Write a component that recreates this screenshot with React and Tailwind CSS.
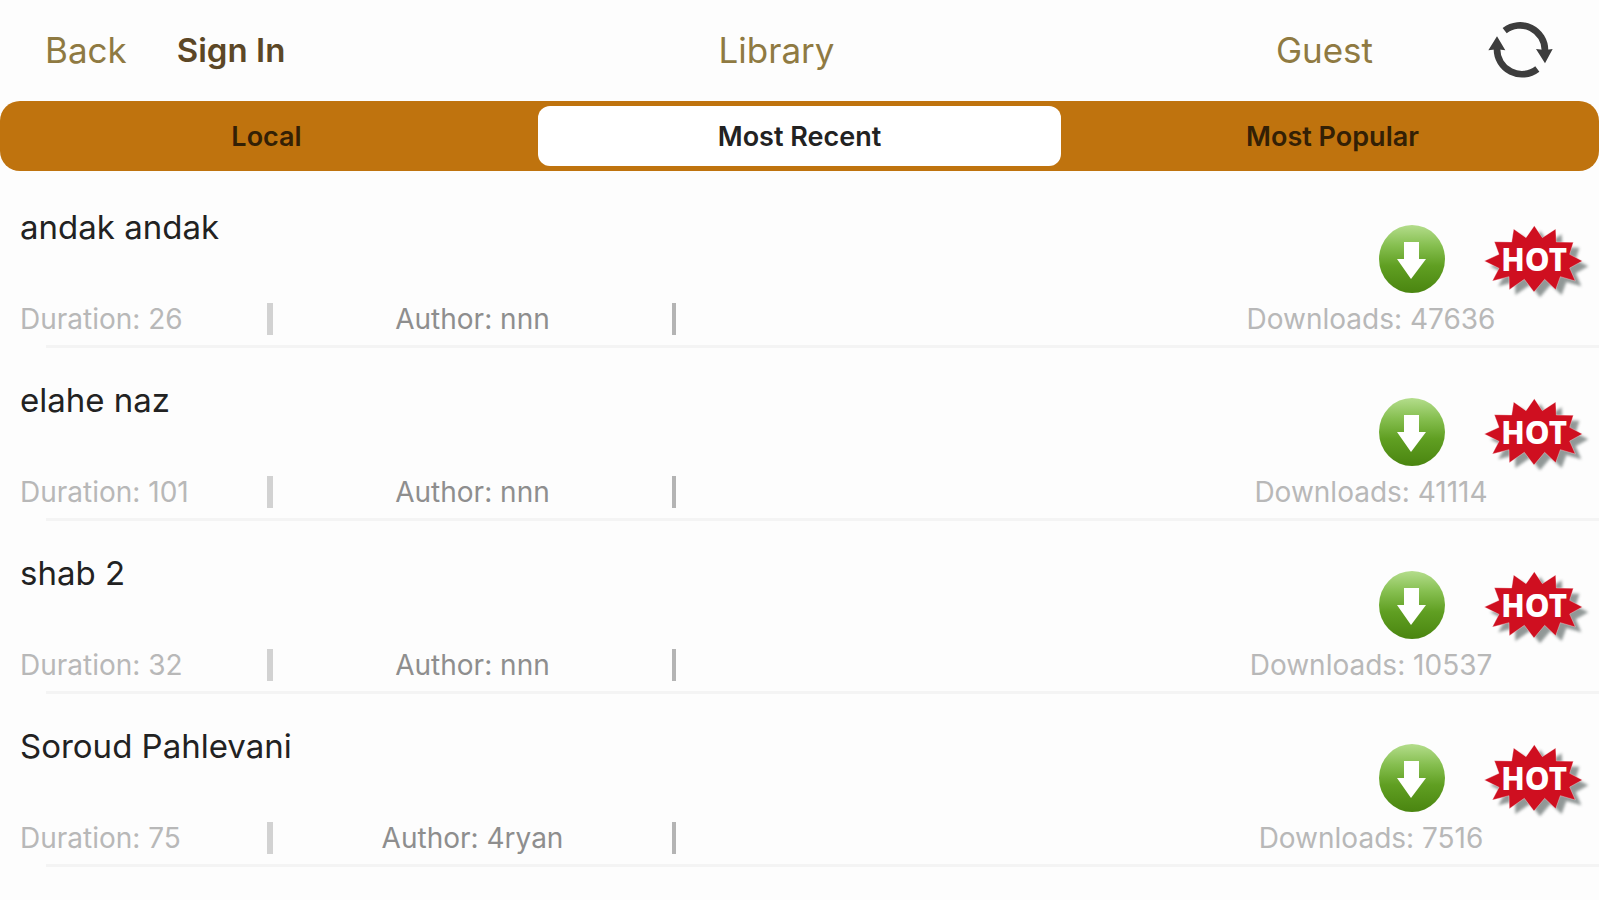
const TABS = ['Local', 'Most Recent', 'Most Popular']

const SONGS = [
  { title: 'andak andak', duration: 26, author: 'nnn', downloads: 47636 },
  { title: 'elahe naz', duration: 101, author: 'nnn', downloads: 41114 },
  { title: 'shab 2', duration: 32, author: 'nnn', downloads: 10537 },
  { title: 'Soroud Pahlevani', duration: 75, author: '4ryan', downloads: 7516 },
]

function RefreshIcon() {
  return (
    <svg width="66" height="60" viewBox="54 30 198 180" fill="none" stroke="#3d3d3d" strokeWidth="20">
      <path d="M107 62A75 75 0 0 1 228 122" />
      <path d="M205 177A75 75 0 0 1 84 116" />
      <path d="M201 117 228 120 251 117 228 160Z" fill="#3d3d3d" stroke="none" />
      <path d="M58 121 84 118 109 121 84 79Z" fill="#3d3d3d" stroke="none" />
    </svg>
  )
}

function DownloadIcon() {
  return (
    <svg width="66" height="68" viewBox="0 0 66 68">
      <defs>
        <linearGradient id="green" x1="0" y1="0" x2="0" y2="1">
          <stop offset="0" stopColor="#b4dd8c" />
          <stop offset="0.3" stopColor="#86bf50" />
          <stop offset="0.6" stopColor="#609f22" />
          <stop offset="1" stopColor="#4a8510" />
        </linearGradient>
      </defs>
      <ellipse cx="33" cy="34" rx="33" ry="34" fill="url(#green)" />
      <path d="M25 17h15v17h7L32 54 18 34h7z" fill="#fff" />
    </svg>
  )
}

const BURST =
  'M190 44 214 80 254 54 256 93 307 94 296 130 334 150 296 171 313 210 268 197 254 236 221 205 189 243 160 205 115 236 114 197 64 210 84 172 40 150 84 130 70 92 122 93 128 54 165 80Z'

function HotBadge() {
  return (
    <svg width="108" height="86" viewBox="36 30 324 258" role="img" aria-label="Hot">
      <defs>
        <filter id="soft" x="-10%" y="-10%" width="120%" height="120%">
          <feGaussianBlur stdDeviation="4" />
        </filter>
      </defs>
      <path d={BURST} fill="#4b5654" opacity="0.6" filter="url(#soft)" transform="translate(18 16)" />
      <path d={BURST} fill="#cf0f20" stroke="#fff" strokeOpacity="0.5" strokeWidth="2" />
      <text x="189" y="179" textAnchor="middle" fill="#fff" fontFamily="Noto Sans, sans-serif" fontWeight="800" fontSize="94">
        HOT
      </text>
    </svg>
  )
}

function SongRow({ song }) {
  return (
    <li>
      <div className="flex h-[170px] pl-5 pr-2">
        <div className="flex flex-1 flex-col justify-between pt-8 pb-2">
          <h2 className="text-[33px] leading-10 text-[#222222]">{song.title}</h2>
          <div className="flex items-center text-[28px] leading-9">
            <span className="w-[247px] text-[#b8b8b8]">Duration: {song.duration}</span>
            <span className="h-8 w-1.5 bg-[#d2d2d2]" />
            <span className="w-[399px] text-center text-[#8e8e8e]">Author: {song.author}</span>
            <span className="h-8 w-1 bg-[#b4b4b4]" />
          </div>
        </div>
        <div className="flex w-[248px] flex-col justify-between pt-[50px] pb-2">
          <button type="button" aria-label={`Download ${song.title}`} className="mr-[50px] self-end">
            <DownloadIcon />
          </button>
          <span className="flex justify-center text-[28px] leading-9 whitespace-pre text-[#b8b8b8]">Downloads: {song.downloads}</span>
        </div>
        <div className="-ml-3 pt-[46px]">
          <HotBadge />
        </div>
      </div>
      <div className="ml-[46px] h-[3px] bg-[#f4f4f4]" />
    </li>
  )
}

export default function App() {
  return (
    <main className="min-h-screen bg-[#fdfdfd] font-['Inter',sans-serif]">
      <header className="flex h-[101px] items-center pr-[46px] pb-0.5 text-[35px] leading-10 text-[#8f7a42]">
        <nav className="flex flex-1 items-center gap-[50px]">
          <button type="button" className="ml-[45px]">Back</button>
          <button type="button" className="text-[33px] font-semibold text-[#5c4726]">Sign In</button>
        </nav>
        <h1>Library</h1>
        <div className="flex flex-1 items-center justify-end gap-[114px]">
          <button type="button">Guest</button>
          <button type="button" aria-label="Refresh"><RefreshIcon /></button>
        </div>
      </header>

      <div role="tablist" className="grid h-[70px] grid-cols-3 rounded-[20px] bg-[#bf730e] py-[5px]">
        {TABS.map((tab) => (
          <button
            key={tab}
            type="button"
            role="tab"
            aria-selected={tab === 'Most Recent'}
            className="mx-[5px] rounded-xl pt-0.5 text-[27px] leading-9 font-semibold text-[#332005] aria-selected:bg-white aria-selected:text-[#222222]"
          >
            {tab}
          </button>
        ))}
      </div>

      <ul className="pt-1">
        {SONGS.map((song) => (
          <SongRow key={song.title} song={song} />
        ))}
      </ul>
    </main>
  )
}
